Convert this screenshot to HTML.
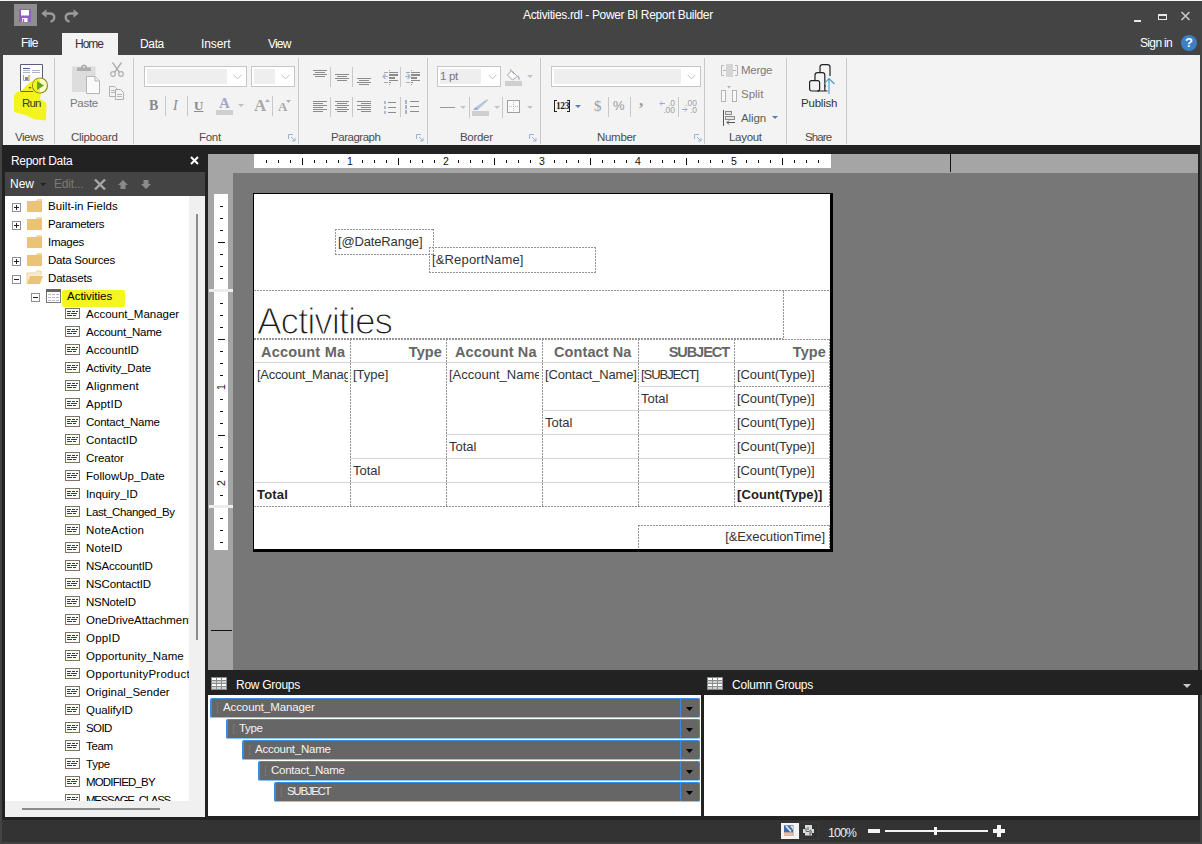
<!DOCTYPE html>
<html>
<head>
<meta charset="utf-8">
<title>Activities.rdl - Power BI Report Builder</title>
<style>
html,body{margin:0;padding:0;}
body{width:1202px;height:844px;overflow:hidden;background:#444444;position:relative;font-family:"Liberation Sans",sans-serif;font-size:12px;color:#000;}
.a{position:absolute;}
.t{position:absolute;white-space:nowrap;line-height:14px;}
svg{position:absolute;overflow:visible;}
/* title */
#topline{left:0;top:0;width:1202px;height:1px;background:#f4f4f4;}
#titlebar{left:0;top:1px;width:1202px;height:53px;background:#444444;}
.w{color:#fff;}
.u{font-size:11.5px;letter-spacing:-0.3px;}
/* ribbon */
#ribbon{left:3px;top:55px;width:1197px;height:90px;background:#f3f3f3;}
.sep{position:absolute;width:1px;background:#c9c9c9;top:58px;height:86px;}
.glabel{color:#4c4c4c;}
.gray{color:#8a8a8a;}
.combo{position:absolute;background:#fff;border:1px solid #c6c6c6;box-sizing:border-box;}
.combo i{position:absolute;left:2px;top:2px;bottom:2px;background:#eeeeee;}
.isep{position:absolute;width:1px;background:#c8c8c8;}
/* left panel */
#strip{left:2px;top:145px;width:1198px;height:675px;background:#222;}
#lp-head{left:5px;top:147px;width:200px;height:25px;background:#222222;}
#lp-tool{left:5px;top:172px;width:200px;height:24px;background:#444444;}
#lp-tree{left:5px;top:196px;width:184px;height:605px;background:#fff;overflow:hidden;}
#lp-scroll{left:189px;top:196px;width:16px;height:605px;background:#f0f0f0;}
#lp-hscroll{left:5px;top:801px;width:200px;height:16px;background:#f0f0f0;}
.tr{position:absolute;white-space:nowrap;line-height:14px;font-size:11.5px;color:#000;}
/* design */
#rulerbg{left:208px;top:154px;width:990px;height:516px;background:#a5a5a5;}
#surface{left:233px;top:173px;width:965px;height:497px;background:#777777;}
#hruler{left:254px;top:154px;width:577px;height:14px;background:#fff;overflow:hidden;}
.vr{position:absolute;left:214px;width:14px;background:#fff;}
#page{left:254px;top:194px;width:576px;height:355px;background:#fff;overflow:hidden;}
.dot{position:absolute;box-sizing:border-box;background:repeating-linear-gradient(90deg,#939393 0 2px,transparent 2px 3px) 0 0/100% 1px no-repeat,repeating-linear-gradient(90deg,#939393 0 2px,transparent 2px 3px) 0 100%/100% 1px no-repeat,repeating-linear-gradient(180deg,#939393 0 2px,transparent 2px 3px) 0 0/1px 100% no-repeat,repeating-linear-gradient(180deg,#939393 0 2px,transparent 2px 3px) 100% 0/1px 100% no-repeat;}
.hd{position:absolute;height:1px;background:repeating-linear-gradient(90deg,#939393 0 2px,transparent 2px 3px);}
.vd{position:absolute;width:1px;background:repeating-linear-gradient(180deg,#939393 0 2px,transparent 2px 3px);}
.rt{margin-top:1px;position:absolute;white-space:nowrap;font-size:13px;line-height:16px;color:#333;}
/* bottom */
#gp-head{left:205px;top:670px;width:997px;height:25px;background:#222222;}
#gp-row{left:208px;top:695px;width:493px;height:121px;background:#fff;}
#gp-col{left:704px;top:695px;width:494px;height:121px;background:#fff;}
.grp{position:absolute;height:20px;background:#666666;border:1px solid #3d8be0;border-left-width:2px;border-bottom-color:#8cc4f4;box-sizing:border-box;border-radius:2px;}
.grp span{position:absolute;left:11px;top:1px;color:#f4f4f4;font-size:11.5px;line-height:14px;white-space:nowrap;}
.grp i{position:absolute;left:4px;top:1px;color:#7e776b;font-size:11px;line-height:14px;font-style:normal;}
.grp u{position:absolute;right:18px;top:0;bottom:0;width:1px;background:#3d8be0;}
#status{left:2px;top:820px;width:1198px;height:22px;background:#333333;}
</style>
</head>
<body>
<div class="a" id="titlebar"></div>
<div class="a" id="topline"></div>
<div class="a" id="ribbon"></div>

<!-- title bar -->
<div class="a" style="left:14px;top:4px;width:23px;height:22px;background:#8e8e8e;"></div>
<svg style="left:19px;top:9px" width="12" height="13" viewBox="0 0 12 13"><path d="M0 0h12v13h-12z" fill="#8d5fc7"/><rect x="2" y="1" width="8" height="5.500" fill="#fff"/><rect x="3" y="9" width="5.500" height="4" fill="#fff"/><rect x="3.800" y="10" width="1.400" height="3" fill="#8d5fc7"/></svg>
<svg style="left:41px;top:9px" width="15" height="14" viewBox="0 0 15 14"><path d="M0.300 4.500 L5.500 0.300 L5.500 3.200 L5.500 8.700 Z" fill="#9a9a9a"/><path d="M4.500 4.500 H8.500 C11.500 4.500 13.300 6.300 13.300 8.500 C13.300 10.500 12 12 9.500 12.600" fill="none" stroke="#9a9a9a" stroke-width="2.300"/></svg>
<svg style="left:64px;top:9px" width="15" height="14" viewBox="0 0 15 14"><path d="M14.700 4.500 L9.500 0.300 L9.500 8.700 Z" fill="#9a9a9a"/><path d="M10.500 4.500 H6.500 C3.500 4.500 1.700 6.300 1.700 8.500 C1.700 10.500 3 12 5.500 12.600" fill="none" stroke="#9a9a9a" stroke-width="2.300"/></svg>
<div class="t w" style="left:523px;top:8px;letter-spacing:-0.34px;">Activities.rdl - Power BI Report Builder</div>
<div class="a" style="left:1134px;top:20px;width:7px;height:2px;background:#e8e8e8;"></div>
<div class="a" style="left:1158px;top:14px;width:9px;height:6px;box-sizing:border-box;border:1px solid #e8e8e8;border-top-width:2px;"></div>
<svg style="left:1181px;top:12px" width="9" height="8" viewBox="0 0 9 8"><path d="M0.5 0 L8.5 8 M8.5 0 L0.5 8" stroke="#c8c8c8" stroke-width="1.6" fill="none"/></svg>
<!-- tabs -->
<div class="a" style="left:62px;top:33px;width:56px;height:22px;background:#f3f3f3;"></div>
<div class="t w" style="left:21px;top:36px;letter-spacing:-0.6px;">File</div>
<div class="t" style="left:75px;top:37px;color:#333;letter-spacing:-1.0px;">Home</div>
<div class="t w" style="left:140px;top:37px;letter-spacing:-0.35px;">Data</div>
<div class="t w" style="left:201px;top:37px;letter-spacing:-0.1px;">Insert</div>
<div class="t w" style="left:268px;top:37px;letter-spacing:-0.8px;">View</div>
<div class="t w" style="left:1140px;top:36px;letter-spacing:-0.65px;">Sign in</div>
<div class="a" style="left:1181px;top:35px;width:16px;height:16px;border-radius:8px;background:#3c80c5;"></div>
<div class="t w" style="left:1185px;top:36px;font-weight:bold;font-size:13px;">?</div>

<!-- ribbon: views + clipboard -->
<div class="sep" style="left:54px"></div><div class="sep" style="left:133px"></div><div class="sep" style="left:298px"></div><div class="sep" style="left:427px"></div><div class="sep" style="left:540px"></div><div class="sep" style="left:704px"></div><div class="sep" style="left:786px"></div><div class="sep" style="left:846px"></div>
<svg style="left:0;top:0" width="60" height="130" viewBox="0 0 60 130"><path d="M20.500 64.500 H42.500 V91.500 H20.500 Z" fill="#fdfdfd" stroke="#5c5c78" stroke-width="1"/><path d="M23 68.500 H30" stroke="#4a5a8a"/><path d="M23 70.500 H30 M32 70.500 H40 M23 72.500 H30 M32 72.500 H40" stroke="#a8b4c8"/><path d="M23.500 75 V80.500 H29.500 V75" fill="none" stroke="#9aa6c0"/><rect x="25" y="77" width="3" height="3" fill="#7a86b0"/><rect x="28" y="75" width="2" height="5" fill="#d8c880"/>
<path d="M20.500 91.500 L30 82 L36 80 L44 86 L41 93.500 L40 99 L46.500 103 L46 120.500 L35 119.500 L25 115 L14 112 L14 95 L17 92 Z" fill="#f3f31e"/><path d="M21 91.500 H33" stroke="#5c5c78"/><circle cx="40" cy="85.500" r="7.500" fill="#fbfbc8" stroke="#8c8c22" stroke-width="1.200"/><path d="M33 85.500 A7 7 0 0 0 40 92.500 L40 78.500 A7 7 0 0 0 33 85.500Z" fill="#f3f31e"/><path d="M37 81 L44 85.500 L37 90 Z" fill="#6ba31f"/><path d="M28.500 87 H31.500 L30 89 Z" fill="#555"/></svg>
<div class="t u" style="left:22px;top:96px;color:#3a3a20;letter-spacing:-0.85px;">Run</div>
<div class="t u glabel" style="left:15px;top:130px;letter-spacing:-0.45px;">Views</div>
<svg style="left:72px;top:64px" width="28" height="30" viewBox="0 0 28 30"><rect x="0" y="2.500" width="23.500" height="25.500" fill="#dddddd"/><path d="M5 7 V3.500 H9 C9 -0.500 15 -0.500 15 3.500 H19 V7 Z" fill="#adadad"/><circle cx="12" cy="3" r="1" fill="#e4e4e4"/><path d="M14.5 12.500 H23 L27.500 17 V29.500 H14.500 Z" fill="#fafafa" stroke="#b5b5b5" stroke-width="1"/><path d="M23 12.500 V17 H27.500" fill="none" stroke="#b5b5b5" stroke-width="1"/></svg>
<div class="t u" style="left:70px;top:96px;color:#7a7a7a;">Paste</div>
<svg style="left:110px;top:62px" width="14" height="15" viewBox="0 0 14 15"><path d="M2.500 0.500 L9.500 10.500 M11.500 0.500 L4.500 10.500" stroke="#b0b0b0" stroke-width="1.4" fill="none"/><circle cx="3" cy="12" r="2.300" fill="none" stroke="#b0b0b0" stroke-width="1.200"/><circle cx="11" cy="12" r="2.300" fill="none" stroke="#b0b0b0" stroke-width="1.200"/></svg>
<svg style="left:109px;top:86px" width="15" height="14" viewBox="0 0 15 14"><path d="M0.500 0.500 H5.500 L8.500 3.500 V10.500 H0.500 Z" fill="#f3f3f3" stroke="#b0b0b0"/><path d="M6.500 3.500 H11.500 L14.500 6.500 V13.500 H6.500 Z" fill="#f3f3f3" stroke="#b0b0b0"/><path d="M2 4.500 H6 M2 6.500 H6 M8 8.500 H13 M8 10.500 H13" stroke="#b8b8b8"/></svg>
<div class="t u glabel" style="left:71px;top:130px;">Clipboard</div>
<!-- font -->
<div class="combo" style="left:144px;top:66px;width:103px;height:21px;"><i style="width:80px"></i></div>
<svg style="left:233px;top:74px" width="9" height="6" viewBox="0 0 9 6"><path d="M0.500 0.800 L4.500 4.800 L8.500 0.800" fill="none" stroke="#c0c0c0" stroke-width="1"/></svg>
<div class="combo" style="left:251px;top:66px;width:44px;height:21px;"><i style="width:21px"></i></div>
<svg style="left:281px;top:74px" width="9" height="6" viewBox="0 0 9 6"><path d="M0.500 0.800 L4.500 4.800 L8.500 0.800" fill="none" stroke="#c0c0c0" stroke-width="1"/></svg>
<div class="t" style="left:149px;top:98px;font-family:'Liberation Serif',serif;font-weight:bold;font-size:14px;line-height:16px;color:#8a8a8a;">B</div>
<div class="isep" style="left:165px;top:96px;height:20px;"></div>
<div class="t" style="left:173px;top:98px;font-family:'Liberation Serif',serif;font-style:italic;font-size:14px;line-height:16px;color:#8a8a8a;">I</div>
<div class="isep" style="left:187px;top:96px;height:20px;"></div>
<div class="t" style="left:194px;top:98px;font-family:'Liberation Serif',serif;font-weight:bold;font-size:13px;line-height:16px;color:#8a8a8a;text-decoration:underline;">U</div>
<div class="t" style="left:219px;top:95px;font-family:'Liberation Serif',serif;font-weight:bold;font-size:15px;line-height:16px;color:#a2a6cc;">A</div>
<div class="a" style="left:216px;top:110px;width:17px;height:5px;background:#cfcfcf;"></div>
<svg style="left:238px;top:104px" width="6" height="3" viewBox="0 0 6 3"><path d="M0 0 H6 L3 3 Z" fill="#bdbdbd"/></svg>
<div class="t" style="left:254px;top:97px;font-family:'Liberation Serif',serif;font-weight:bold;font-size:17px;line-height:18px;color:#a8a8a8;">A</div>
<svg style="left:265px;top:99px" width="5" height="3" viewBox="0 0 5 3"><path d="M0 3 H5 L2.500 0 Z" fill="#b0b0b0"/></svg>
<div class="isep" style="left:272px;top:96px;height:20px;"></div>
<div class="t" style="left:278px;top:100px;font-family:'Liberation Serif',serif;font-weight:bold;font-size:13px;line-height:14px;color:#a8a8a8;">A</div>
<svg style="left:286px;top:100px" width="5" height="3" viewBox="0 0 5 3"><path d="M0 0 H5 L2.500 3 Z" fill="#b0b0b0"/></svg>
<div class="t u glabel" style="left:199px;top:130px;">Font</div>
<svg class="launch" style="left:288px;top:134px" width="8" height="8" viewBox="0 0 8 8"><path d="M0.500 5 V0.500 H5" fill="none" stroke="#9bb4cf"/><path d="M3 3 L7 7 M7 4 V7 H4" fill="none" stroke="#9bb4cf"/></svg>
<!-- paragraph -->
<svg style="left:0;top:0" width="1202" height="150" viewBox="0 0 1202 150"><rect x="313.0" y="70" width="14" height="1" fill="#8c8c8c"/><rect x="315.0" y="72" width="10" height="1" fill="#8c8c8c"/><rect x="313.0" y="74" width="14" height="1" fill="#8c8c8c"/><rect x="315.0" y="76" width="10" height="1" fill="#8c8c8c"/><rect x="335.0" y="74" width="14" height="1" fill="#8c8c8c"/><rect x="337.0" y="76" width="10" height="1" fill="#8c8c8c"/><rect x="335.0" y="78" width="14" height="1" fill="#8c8c8c"/><rect x="337.0" y="80" width="10" height="1" fill="#8c8c8c"/><rect x="357.0" y="78" width="14" height="1" fill="#8c8c8c"/><rect x="359.0" y="80" width="10" height="1" fill="#8c8c8c"/><rect x="357.0" y="82" width="14" height="1" fill="#8c8c8c"/><rect x="359.0" y="84" width="10" height="1" fill="#8c8c8c"/><rect x="330" y="67" width="1" height="20" fill="#c8c8c8"/><rect x="352" y="67" width="1" height="20" fill="#c8c8c8"/><rect x="400" y="67" width="1" height="20" fill="#c8c8c8"/><rect x="330" y="97" width="1" height="20" fill="#c8c8c8"/><rect x="352" y="97" width="1" height="20" fill="#c8c8c8"/><rect x="400" y="97" width="1" height="20" fill="#c8c8c8"/><rect x="389" y="70" width="1" height="1" fill="#999"/><rect x="384" y="72" width="4" height="1" fill="#aaa"/><rect x="389" y="72" width="9" height="1" fill="#8c8c8c"/><rect x="389" y="74" width="9" height="2" fill="#8c8c8c"/><rect x="389" y="77" width="6" height="2" fill="#8c8c8c"/><rect x="389" y="80" width="9" height="1" fill="#8c8c8c"/><rect x="384" y="82" width="4" height="1" fill="#aaa"/><rect x="389" y="82" width="2" height="1" fill="#8c8c8c"/><rect x="389" y="84" width="1" height="1" fill="#999"/><path d="M388 76.5 H383 M385.5 74 L383 76.5 L385.5 79" stroke="#a4b4d0" stroke-width="1.2" fill="none"/><rect x="411" y="70" width="1" height="1" fill="#999"/><rect x="406" y="72" width="4" height="1" fill="#aaa"/><rect x="411" y="72" width="9" height="1" fill="#8c8c8c"/><rect x="411" y="74" width="9" height="2" fill="#8c8c8c"/><rect x="411" y="77" width="6" height="2" fill="#8c8c8c"/><rect x="411" y="80" width="9" height="1" fill="#8c8c8c"/><rect x="406" y="82" width="4" height="1" fill="#aaa"/><rect x="411" y="82" width="2" height="1" fill="#8c8c8c"/><rect x="411" y="84" width="1" height="1" fill="#999"/><path d="M405 76.5 H410 M407.5 74 L410 76.5 L407.5 79" stroke="#a4b4d0" stroke-width="1.2" fill="none"/><rect x="313" y="101" width="14" height="1" fill="#8c8c8c"/><rect x="313" y="103" width="10" height="1" fill="#8c8c8c"/><rect x="313" y="105" width="14" height="1" fill="#8c8c8c"/><rect x="313" y="107" width="10" height="1" fill="#8c8c8c"/><rect x="313" y="109" width="14" height="1" fill="#8c8c8c"/><rect x="313" y="111" width="10" height="1" fill="#8c8c8c"/><rect x="335.0" y="101" width="14" height="1" fill="#8c8c8c"/><rect x="337.0" y="103" width="10" height="1" fill="#8c8c8c"/><rect x="335.0" y="105" width="14" height="1" fill="#8c8c8c"/><rect x="337.0" y="107" width="10" height="1" fill="#8c8c8c"/><rect x="335.0" y="109" width="14" height="1" fill="#8c8c8c"/><rect x="337.0" y="111" width="10" height="1" fill="#8c8c8c"/><rect x="357" y="101" width="14" height="1" fill="#8c8c8c"/><rect x="361" y="103" width="10" height="1" fill="#8c8c8c"/><rect x="357" y="105" width="14" height="1" fill="#8c8c8c"/><rect x="361" y="107" width="10" height="1" fill="#8c8c8c"/><rect x="357" y="109" width="14" height="1" fill="#8c8c8c"/><rect x="361" y="111" width="10" height="1" fill="#8c8c8c"/><rect x="384" y="101" width="2" height="3" fill="#b4b8cc"/><rect x="388" y="102" width="8" height="1" fill="#8c8c8c"/><rect x="384" y="106" width="2" height="3" fill="#b4b8cc"/><rect x="388" y="107" width="8" height="1" fill="#8c8c8c"/><rect x="384" y="111" width="2" height="3" fill="#b4b8cc"/><rect x="388" y="112" width="8" height="1" fill="#8c8c8c"/><rect x="405" y="100" width="2" height="4" fill="#a4b4d0"/><rect x="410" y="101" width="9" height="1" fill="#8c8c8c"/><rect x="405" y="105" width="2" height="4" fill="#a4b4d0"/><rect x="410" y="106" width="9" height="1" fill="#8c8c8c"/><rect x="405" y="110" width="2" height="4" fill="#a4b4d0"/><rect x="410" y="111" width="9" height="1" fill="#8c8c8c"/></svg>
<div class="t u glabel" style="left:331px;top:130px;letter-spacing:-0.47px;">Paragraph</div>
<svg class="launch" style="left:416px;top:134px" width="8" height="8" viewBox="0 0 8 8"><path d="M0.500 5 V0.500 H5" fill="none" stroke="#9bb4cf"/><path d="M3 3 L7 7 M7 4 V7 H4" fill="none" stroke="#9bb4cf"/></svg>
<!-- border -->
<div class="combo" style="left:437px;top:66px;width:64px;height:21px;"><i style="width:41px"></i></div>
<div class="t u" style="left:440px;top:69px;color:#777;">1 pt</div>
<svg style="left:488px;top:74px" width="9" height="6" viewBox="0 0 9 6"><path d="M0.500 0.800 L4.500 4.800 L8.500 0.800" fill="none" stroke="#c0c0c0" stroke-width="1"/></svg>
<svg style="left:505px;top:68px" width="18" height="18" viewBox="0 0 18 18"><rect x="0" y="13" width="17" height="5" fill="#cfcfcf"/><path d="M6.500 2.500 L12.500 8.500 L7.500 12 L2.500 7 Z" fill="#fafafa" stroke="#a8a8a8"/><path d="M5 1 L9 6" stroke="#a8a8a8" fill="none"/><path d="M13 7 C14.500 9 15.500 10.500 14.500 12 C13.500 12.500 12.500 11.500 13 7Z" fill="#a9bfe0"/></svg>
<svg style="left:527px;top:75px" width="6" height="3" viewBox="0 0 6 3"><path d="M0 0 H6 L3 3 Z" fill="#c4c4c4"/></svg>
<div class="a" style="left:440px;top:107px;width:15px;height:1px;background:#9a9a9a;"></div>
<svg style="left:460px;top:106px" width="6" height="3" viewBox="0 0 6 3"><path d="M0 0 H6 L3 3 Z" fill="#c4c4c4"/></svg>
<div class="isep" style="left:469px;top:97px;height:21px;"></div>
<svg style="left:472px;top:99px" width="18" height="17" viewBox="0 0 18 17"><rect x="0" y="12" width="17" height="5" fill="#cfcfcf"/><path d="M3 10.500 L6 10.500 L15 2.500 L13.500 1 L4 8 Z" fill="#b4c6e4"/><path d="M13.500 1 L15 2.500 L16.500 1.500 L15 0 Z" fill="#e8c890"/><path d="M1 11 L4 8 L6 10.500 Z" fill="#8ea8d0"/></svg>
<svg style="left:494px;top:106px" width="6" height="3" viewBox="0 0 6 3"><path d="M0 0 H6 L3 3 Z" fill="#c4c4c4"/></svg>
<div class="isep" style="left:502px;top:97px;height:21px;"></div>
<svg style="left:507px;top:100px" width="13" height="13" viewBox="0 0 13 13"><rect x="0.500" y="0.500" width="12" height="12" fill="#fafafa" stroke="#a0a0a0"/><path d="M6.500 2 V11 M2 6.500 H11" stroke="#c0c0c0" stroke-dasharray="1 1"/></svg>
<svg style="left:527px;top:106px" width="6" height="3" viewBox="0 0 6 3"><path d="M0 0 H6 L3 3 Z" fill="#c4c4c4"/></svg>
<div class="t u glabel" style="left:460px;top:130px;">Border</div>
<svg class="launch" style="left:529px;top:134px" width="8" height="8" viewBox="0 0 8 8"><path d="M0.500 5 V0.500 H5" fill="none" stroke="#9bb4cf"/><path d="M3 3 L7 7 M7 4 V7 H4" fill="none" stroke="#9bb4cf"/></svg>
<!-- number -->
<div class="combo" style="left:551px;top:66px;width:150px;height:21px;"><i style="width:127px"></i></div>
<svg style="left:687px;top:74px" width="9" height="6" viewBox="0 0 9 6"><path d="M0.500 0.800 L4.500 4.800 L8.500 0.800" fill="none" stroke="#c0c0c0" stroke-width="1"/></svg>
<div class="t" style="left:554px;top:100px;font-family:'Liberation Serif',serif;font-weight:bold;font-size:9.5px;line-height:12px;color:#222;letter-spacing:-0.4px;border-left:1px solid #222;border-right:1px solid #222;padding:0 1px;height:12px;width:12px;overflow:hidden;">123</div>
<div class="a" style="left:554px;top:100px;width:3px;height:1px;background:#222"></div><div class="a" style="left:554px;top:111px;width:3px;height:1px;background:#222"></div><div class="a" style="left:567px;top:100px;width:3px;height:1px;background:#222"></div><div class="a" style="left:567px;top:111px;width:3px;height:1px;background:#222"></div>
<svg style="left:575px;top:105px" width="6" height="3" viewBox="0 0 6 3"><path d="M0 0 H6 L3 3 Z" fill="#5b7fb0"/></svg>
<div class="t" style="left:594px;top:98px;font-family:'Liberation Serif',serif;font-size:15px;line-height:16px;color:#a0a0a0;">$</div>
<div class="isep" style="left:608px;top:97px;height:20px;"></div>
<div class="t" style="left:613px;top:98px;font-size:13px;line-height:16px;color:#999;letter-spacing:-0.5px;">%</div>
<div class="isep" style="left:630px;top:97px;height:20px;"></div>
<div class="t" style="left:639px;top:93px;font-family:'Liberation Serif',serif;font-weight:bold;font-size:17px;line-height:16px;color:#9a9a9a;">,</div>
<div class="t" style="left:662px;top:100px;width:13px;text-align:right;font-size:8.5px;line-height:6.5px;color:#a0a0a0;letter-spacing:0;">.0<br>.00</div>
<svg style="left:659px;top:101px" width="6" height="5" viewBox="0 0 6 5"><path d="M6 2.500 H1 M3 0.500 L1 2.500 L3 4.500" stroke="#9aaccc" fill="none"/></svg>
<div class="isep" style="left:678px;top:97px;height:20px;"></div>
<div class="t" style="left:684px;top:100px;width:13px;text-align:right;font-size:8.5px;line-height:6.5px;color:#a0a0a0;letter-spacing:0;">.00<br>.0</div>
<svg style="left:682px;top:107px" width="6" height="5" viewBox="0 0 6 5"><path d="M0 2.500 H5 M3 0.500 L5 2.500 L3 4.500" stroke="#9aaccc" fill="none"/></svg>
<div class="t u glabel" style="left:597px;top:130px;">Number</div>
<svg class="launch" style="left:694px;top:134px" width="8" height="8" viewBox="0 0 8 8"><path d="M0.500 5 V0.500 H5" fill="none" stroke="#9bb4cf"/><path d="M3 3 L7 7 M7 4 V7 H4" fill="none" stroke="#9bb4cf"/></svg>
<!-- layout -->
<svg style="left:721px;top:64px" width="17" height="13" viewBox="0 0 17 13"><path d="M3 1.500 H0.500 V11.500 H3 M14 1.500 H16.500 V11.500 H14" fill="none" stroke="#b4b4b4"/><rect x="5" y="0" width="7" height="13" fill="#d4d4d4"/><path d="M2 6.500 H5 M12 6.500 H15" stroke="#b4b4b4"/></svg>
<div class="t u" style="left:741px;top:63px;color:#7c7c7c;">Merge</div>
<svg style="left:721px;top:86px" width="17" height="16" viewBox="0 0 17 16"><rect x="0.500" y="4.500" width="4" height="11" fill="#f8f8f8" stroke="#b4b4b4"/><rect x="11.500" y="4.500" width="4" height="11" fill="#f8f8f8" stroke="#b4b4b4"/><path d="M6 0 H10 L8 2.500Z" fill="#b4b4b4"/></svg>
<div class="t u" style="left:741px;top:87px;color:#7c7c7c;letter-spacing:0px;">Split</div>
<svg style="left:723px;top:110px" width="14" height="16" viewBox="0 0 14 16"><path d="M0.500 0 V16" stroke="#555"/><rect x="2.500" y="1.500" width="6" height="3" fill="#e4e4e4" stroke="#8a8a8a"/><rect x="2.500" y="6.500" width="9" height="3" fill="#e4e4e4" stroke="#8a8a8a"/><path d="M12 12.500 H4 M6 10.500 L4 12.500 L6 14.500" stroke="#555" fill="none"/></svg>
<div class="t u" style="left:741px;top:111px;color:#5a5a5a;letter-spacing:-0.1px;">Align</div>
<svg style="left:772px;top:116px" width="6" height="3" viewBox="0 0 6 3"><path d="M0 0 H6 L3 3 Z" fill="#5b7fb0"/></svg>
<div class="t u glabel" style="left:729px;top:130px;">Layout</div>
<!-- share -->
<svg style="left:808px;top:64px" width="30" height="31" viewBox="0 0 30 31"><path d="M12 8.500 V3 C12 1.300 13 0.600 14.500 0.600 H19.500 C21 0.600 22 1.300 22 3 V12" fill="none" stroke="#222" stroke-width="1.200"/><path d="M7 16 V11 C7 9.300 8 8.600 9.500 8.600 H14.500 C16 8.600 16.800 9.300 16.800 11 V27" fill="none" stroke="#222" stroke-width="1.200"/><rect x="1.600" y="16.600" width="10" height="10.400" rx="2" fill="none" stroke="#222" stroke-width="1.200"/><path d="M9 27 H19.500 M16.800 22 H18" stroke="#222" stroke-width="1.200" fill="none"/><path d="M21 30 V14.500 M16 20 L21 14.500 L26.500 20" fill="none" stroke="#3f9bc9" stroke-width="1.100"/></svg>
<div class="t u" style="left:801px;top:96px;color:#333;letter-spacing:-0.2px;">Publish</div>
<div class="t u glabel" style="left:805px;top:130px;letter-spacing:-0.9px;">Share</div>
<div class="a" id="strip"></div>
<div class="a" id="lp-head"></div>
<div class="a" id="lp-tool"></div>
<div class="a" id="lp-tree">
<svg style="left:7px;top:7px" width="9" height="9" viewBox="0 0 9 9"><rect x="0.500" y="0.500" width="8" height="8" fill="#fff" stroke="#8e8e9a"/><path d="M2 4.500 H7" stroke="#222"/><path d="M4.500 2 V7" stroke="#222"/></svg><svg style="left:22px;top:3px" width="16" height="13" viewBox="0 0 16 13"><path d="M0 2 H9 L10.500 0 H15 V13 H0 Z" fill="#ebc374"/><path d="M9 2 L10.500 0 H15 V2 Z" fill="#f1d9a4"/></svg><div class="tr" style="left:43px;top:3px;letter-spacing:0.05px;">Built-in Fields</div>
<svg style="left:7px;top:25px" width="9" height="9" viewBox="0 0 9 9"><rect x="0.500" y="0.500" width="8" height="8" fill="#fff" stroke="#8e8e9a"/><path d="M2 4.500 H7" stroke="#222"/><path d="M4.500 2 V7" stroke="#222"/></svg><svg style="left:22px;top:21px" width="16" height="13" viewBox="0 0 16 13"><path d="M0 2 H9 L10.500 0 H15 V13 H0 Z" fill="#ebc374"/><path d="M9 2 L10.500 0 H15 V2 Z" fill="#f1d9a4"/></svg><div class="tr" style="left:43px;top:21px;letter-spacing:-0.34px;">Parameters</div>
<svg style="left:22px;top:39px" width="16" height="13" viewBox="0 0 16 13"><path d="M0 2 H9 L10.500 0 H15 V13 H0 Z" fill="#ebc374"/><path d="M9 2 L10.500 0 H15 V2 Z" fill="#f1d9a4"/></svg><div class="tr" style="left:43px;top:39px;letter-spacing:-0.28px;">Images</div>
<svg style="left:7px;top:61px" width="9" height="9" viewBox="0 0 9 9"><rect x="0.500" y="0.500" width="8" height="8" fill="#fff" stroke="#8e8e9a"/><path d="M2 4.500 H7" stroke="#222"/><path d="M4.500 2 V7" stroke="#222"/></svg><svg style="left:22px;top:57px" width="16" height="13" viewBox="0 0 16 13"><path d="M0 2 H9 L10.500 0 H15 V13 H0 Z" fill="#ebc374"/><path d="M9 2 L10.500 0 H15 V2 Z" fill="#f1d9a4"/></svg><div class="tr" style="left:43px;top:57px;letter-spacing:-0.23px;">Data Sources</div>
<svg style="left:7px;top:79px" width="9" height="9" viewBox="0 0 9 9"><rect x="0.500" y="0.500" width="8" height="8" fill="#fff" stroke="#8e8e9a"/><path d="M2 4.500 H7" stroke="#222"/></svg><svg style="left:22px;top:75px" width="16" height="13" viewBox="0 0 16 13"><path d="M0 13 V2 H8 L9.500 0 H14 V4" fill="#f6ebd0" stroke="#ecd39a" stroke-width="1"/><path d="M0 13 L3 5 H16 L13 13 Z" fill="#ebc374"/></svg><div class="tr" style="left:43px;top:75px;letter-spacing:-0.17px;">Datasets</div>
<div class="a" style="left:57px;top:94px;width:63px;height:17px;background:#f5f520;border-radius:2px;"></div><svg style="left:26px;top:97px" width="9" height="9" viewBox="0 0 9 9"><rect x="0.500" y="0.500" width="8" height="8" fill="#fff" stroke="#8e8e9a"/><path d="M2 4.500 H7" stroke="#222"/></svg><svg style="left:41px;top:93px" width="15" height="14" viewBox="0 0 15 14"><rect x="0.500" y="0.500" width="14" height="13" fill="#fff" stroke="#777"/><rect x="0" y="0" width="15" height="3" fill="#666"/><rect x="2" y="5" width="3" height="1" fill="#b6b6d4"/><rect x="6" y="5" width="3" height="1" fill="#b6b6d4"/><rect x="10" y="5" width="3" height="1" fill="#b6b6d4"/><rect x="2" y="8" width="3" height="1" fill="#b6b6d4"/><rect x="6" y="8" width="3" height="1" fill="#b6b6d4"/><rect x="10" y="8" width="3" height="1" fill="#b6b6d4"/><rect x="2" y="11" width="3" height="1" fill="#b6b6d4"/><rect x="6" y="11" width="3" height="1" fill="#b6b6d4"/><rect x="10" y="11" width="3" height="1" fill="#b6b6d4"/></svg><div class="tr" style="left:62px;top:93px;letter-spacing:-0.02px;">Activities</div>
<svg style="left:60px;top:112px" width="15" height="11" viewBox="0 0 15 11"><rect x="0.500" y="0.500" width="14" height="10" fill="#fff" stroke="#7c7466"/><path d="M2 3.500 H6 M7 3.500 H10 M11 3.500 H13 M2 5.500 H5 M6 5.500 H12 M2 7.500 H7 M8 7.500 H11" stroke="#2c2ca4"/></svg><div class="tr" style="left:81px;top:111px;letter-spacing:-0.01px;">Account_Manager</div>
<svg style="left:60px;top:130px" width="15" height="11" viewBox="0 0 15 11"><rect x="0.500" y="0.500" width="14" height="10" fill="#fff" stroke="#7c7466"/><path d="M2 3.500 H6 M7 3.500 H10 M11 3.500 H13 M2 5.500 H5 M6 5.500 H12 M2 7.500 H7 M8 7.500 H11" stroke="#2c2ca4"/></svg><div class="tr" style="left:81px;top:129px;letter-spacing:-0.24px;">Account_Name</div>
<svg style="left:60px;top:148px" width="15" height="11" viewBox="0 0 15 11"><rect x="0.500" y="0.500" width="14" height="10" fill="#fff" stroke="#7c7466"/><path d="M2 3.500 H6 M7 3.500 H10 M11 3.500 H13 M2 5.500 H5 M6 5.500 H12 M2 7.500 H7 M8 7.500 H11" stroke="#2c2ca4"/></svg><div class="tr" style="left:81px;top:147px;letter-spacing:-0.02px;">AccountID</div>
<svg style="left:60px;top:166px" width="15" height="11" viewBox="0 0 15 11"><rect x="0.500" y="0.500" width="14" height="10" fill="#fff" stroke="#7c7466"/><path d="M2 3.500 H6 M7 3.500 H10 M11 3.500 H13 M2 5.500 H5 M6 5.500 H12 M2 7.500 H7 M8 7.500 H11" stroke="#2c2ca4"/></svg><div class="tr" style="left:81px;top:165px;letter-spacing:-0.17px;">Activity_Date</div>
<svg style="left:60px;top:184px" width="15" height="11" viewBox="0 0 15 11"><rect x="0.500" y="0.500" width="14" height="10" fill="#fff" stroke="#7c7466"/><path d="M2 3.500 H6 M7 3.500 H10 M11 3.500 H13 M2 5.500 H5 M6 5.500 H12 M2 7.500 H7 M8 7.500 H11" stroke="#2c2ca4"/></svg><div class="tr" style="left:81px;top:183px;letter-spacing:0.21px;">Alignment</div>
<svg style="left:60px;top:202px" width="15" height="11" viewBox="0 0 15 11"><rect x="0.500" y="0.500" width="14" height="10" fill="#fff" stroke="#7c7466"/><path d="M2 3.500 H6 M7 3.500 H10 M11 3.500 H13 M2 5.500 H5 M6 5.500 H12 M2 7.500 H7 M8 7.500 H11" stroke="#2c2ca4"/></svg><div class="tr" style="left:81px;top:201px;letter-spacing:0.21px;">ApptID</div>
<svg style="left:60px;top:220px" width="15" height="11" viewBox="0 0 15 11"><rect x="0.500" y="0.500" width="14" height="10" fill="#fff" stroke="#7c7466"/><path d="M2 3.500 H6 M7 3.500 H10 M11 3.500 H13 M2 5.500 H5 M6 5.500 H12 M2 7.500 H7 M8 7.500 H11" stroke="#2c2ca4"/></svg><div class="tr" style="left:81px;top:219px;letter-spacing:-0.26px;">Contact_Name</div>
<svg style="left:60px;top:238px" width="15" height="11" viewBox="0 0 15 11"><rect x="0.500" y="0.500" width="14" height="10" fill="#fff" stroke="#7c7466"/><path d="M2 3.500 H6 M7 3.500 H10 M11 3.500 H13 M2 5.500 H5 M6 5.500 H12 M2 7.500 H7 M8 7.500 H11" stroke="#2c2ca4"/></svg><div class="tr" style="left:81px;top:237px;letter-spacing:0.01px;">ContactID</div>
<svg style="left:60px;top:256px" width="15" height="11" viewBox="0 0 15 11"><rect x="0.500" y="0.500" width="14" height="10" fill="#fff" stroke="#7c7466"/><path d="M2 3.500 H6 M7 3.500 H10 M11 3.500 H13 M2 5.500 H5 M6 5.500 H12 M2 7.500 H7 M8 7.500 H11" stroke="#2c2ca4"/></svg><div class="tr" style="left:81px;top:255px;letter-spacing:-0.07px;">Creator</div>
<svg style="left:60px;top:274px" width="15" height="11" viewBox="0 0 15 11"><rect x="0.500" y="0.500" width="14" height="10" fill="#fff" stroke="#7c7466"/><path d="M2 3.500 H6 M7 3.500 H10 M11 3.500 H13 M2 5.500 H5 M6 5.500 H12 M2 7.500 H7 M8 7.500 H11" stroke="#2c2ca4"/></svg><div class="tr" style="left:81px;top:273px;letter-spacing:0.01px;">FollowUp_Date</div>
<svg style="left:60px;top:292px" width="15" height="11" viewBox="0 0 15 11"><rect x="0.500" y="0.500" width="14" height="10" fill="#fff" stroke="#7c7466"/><path d="M2 3.500 H6 M7 3.500 H10 M11 3.500 H13 M2 5.500 H5 M6 5.500 H12 M2 7.500 H7 M8 7.500 H11" stroke="#2c2ca4"/></svg><div class="tr" style="left:81px;top:291px;letter-spacing:-0.08px;">Inquiry_ID</div>
<svg style="left:60px;top:310px" width="15" height="11" viewBox="0 0 15 11"><rect x="0.500" y="0.500" width="14" height="10" fill="#fff" stroke="#7c7466"/><path d="M2 3.500 H6 M7 3.500 H10 M11 3.500 H13 M2 5.500 H5 M6 5.500 H12 M2 7.500 H7 M8 7.500 H11" stroke="#2c2ca4"/></svg><div class="tr" style="left:81px;top:309px;letter-spacing:-0.41px;">Last_Changed_By</div>
<svg style="left:60px;top:328px" width="15" height="11" viewBox="0 0 15 11"><rect x="0.500" y="0.500" width="14" height="10" fill="#fff" stroke="#7c7466"/><path d="M2 3.500 H6 M7 3.500 H10 M11 3.500 H13 M2 5.500 H5 M6 5.500 H12 M2 7.500 H7 M8 7.500 H11" stroke="#2c2ca4"/></svg><div class="tr" style="left:81px;top:327px;letter-spacing:0.19px;">NoteAction</div>
<svg style="left:60px;top:346px" width="15" height="11" viewBox="0 0 15 11"><rect x="0.500" y="0.500" width="14" height="10" fill="#fff" stroke="#7c7466"/><path d="M2 3.500 H6 M7 3.500 H10 M11 3.500 H13 M2 5.500 H5 M6 5.500 H12 M2 7.500 H7 M8 7.500 H11" stroke="#2c2ca4"/></svg><div class="tr" style="left:81px;top:345px;letter-spacing:0.09px;">NoteID</div>
<svg style="left:60px;top:364px" width="15" height="11" viewBox="0 0 15 11"><rect x="0.500" y="0.500" width="14" height="10" fill="#fff" stroke="#7c7466"/><path d="M2 3.500 H6 M7 3.500 H10 M11 3.500 H13 M2 5.500 H5 M6 5.500 H12 M2 7.500 H7 M8 7.500 H11" stroke="#2c2ca4"/></svg><div class="tr" style="left:81px;top:363px;letter-spacing:-0.21px;">NSAccountID</div>
<svg style="left:60px;top:382px" width="15" height="11" viewBox="0 0 15 11"><rect x="0.500" y="0.500" width="14" height="10" fill="#fff" stroke="#7c7466"/><path d="M2 3.500 H6 M7 3.500 H10 M11 3.500 H13 M2 5.500 H5 M6 5.500 H12 M2 7.500 H7 M8 7.500 H11" stroke="#2c2ca4"/></svg><div class="tr" style="left:81px;top:381px;letter-spacing:-0.2px;">NSContactID</div>
<svg style="left:60px;top:400px" width="15" height="11" viewBox="0 0 15 11"><rect x="0.500" y="0.500" width="14" height="10" fill="#fff" stroke="#7c7466"/><path d="M2 3.500 H6 M7 3.500 H10 M11 3.500 H13 M2 5.500 H5 M6 5.500 H12 M2 7.500 H7 M8 7.500 H11" stroke="#2c2ca4"/></svg><div class="tr" style="left:81px;top:399px;letter-spacing:-0.24px;">NSNoteID</div>
<svg style="left:60px;top:418px" width="15" height="11" viewBox="0 0 15 11"><rect x="0.500" y="0.500" width="14" height="10" fill="#fff" stroke="#7c7466"/><path d="M2 3.500 H6 M7 3.500 H10 M11 3.500 H13 M2 5.500 H5 M6 5.500 H12 M2 7.500 H7 M8 7.500 H11" stroke="#2c2ca4"/></svg><div class="tr" style="left:81px;top:417px;letter-spacing:-0.06px;">OneDriveAttachment</div>
<svg style="left:60px;top:436px" width="15" height="11" viewBox="0 0 15 11"><rect x="0.500" y="0.500" width="14" height="10" fill="#fff" stroke="#7c7466"/><path d="M2 3.500 H6 M7 3.500 H10 M11 3.500 H13 M2 5.500 H5 M6 5.500 H12 M2 7.500 H7 M8 7.500 H11" stroke="#2c2ca4"/></svg><div class="tr" style="left:81px;top:435px;letter-spacing:0.19px;">OppID</div>
<svg style="left:60px;top:454px" width="15" height="11" viewBox="0 0 15 11"><rect x="0.500" y="0.500" width="14" height="10" fill="#fff" stroke="#7c7466"/><path d="M2 3.500 H6 M7 3.500 H10 M11 3.500 H13 M2 5.500 H5 M6 5.500 H12 M2 7.500 H7 M8 7.500 H11" stroke="#2c2ca4"/></svg><div class="tr" style="left:81px;top:453px;letter-spacing:0.08px;">Opportunity_Name</div>
<svg style="left:60px;top:472px" width="15" height="11" viewBox="0 0 15 11"><rect x="0.500" y="0.500" width="14" height="10" fill="#fff" stroke="#7c7466"/><path d="M2 3.500 H6 M7 3.500 H10 M11 3.500 H13 M2 5.500 H5 M6 5.500 H12 M2 7.500 H7 M8 7.500 H11" stroke="#2c2ca4"/></svg><div class="tr" style="left:81px;top:471px;letter-spacing:0.27px;">OpportunityProduct</div>
<svg style="left:60px;top:490px" width="15" height="11" viewBox="0 0 15 11"><rect x="0.500" y="0.500" width="14" height="10" fill="#fff" stroke="#7c7466"/><path d="M2 3.500 H6 M7 3.500 H10 M11 3.500 H13 M2 5.500 H5 M6 5.500 H12 M2 7.500 H7 M8 7.500 H11" stroke="#2c2ca4"/></svg><div class="tr" style="left:81px;top:489px;letter-spacing:0.04px;">Original_Sender</div>
<svg style="left:60px;top:508px" width="15" height="11" viewBox="0 0 15 11"><rect x="0.500" y="0.500" width="14" height="10" fill="#fff" stroke="#7c7466"/><path d="M2 3.500 H6 M7 3.500 H10 M11 3.500 H13 M2 5.500 H5 M6 5.500 H12 M2 7.500 H7 M8 7.500 H11" stroke="#2c2ca4"/></svg><div class="tr" style="left:81px;top:507px;letter-spacing:-0.05px;">QualifyID</div>
<svg style="left:60px;top:526px" width="15" height="11" viewBox="0 0 15 11"><rect x="0.500" y="0.500" width="14" height="10" fill="#fff" stroke="#7c7466"/><path d="M2 3.500 H6 M7 3.500 H10 M11 3.500 H13 M2 5.500 H5 M6 5.500 H12 M2 7.500 H7 M8 7.500 H11" stroke="#2c2ca4"/></svg><div class="tr" style="left:81px;top:525px;letter-spacing:-0.58px;">SOID</div>
<svg style="left:60px;top:544px" width="15" height="11" viewBox="0 0 15 11"><rect x="0.500" y="0.500" width="14" height="10" fill="#fff" stroke="#7c7466"/><path d="M2 3.500 H6 M7 3.500 H10 M11 3.500 H13 M2 5.500 H5 M6 5.500 H12 M2 7.500 H7 M8 7.500 H11" stroke="#2c2ca4"/></svg><div class="tr" style="left:81px;top:543px;letter-spacing:-0.35px;">Team</div>
<svg style="left:60px;top:562px" width="15" height="11" viewBox="0 0 15 11"><rect x="0.500" y="0.500" width="14" height="10" fill="#fff" stroke="#7c7466"/><path d="M2 3.500 H6 M7 3.500 H10 M11 3.500 H13 M2 5.500 H5 M6 5.500 H12 M2 7.500 H7 M8 7.500 H11" stroke="#2c2ca4"/></svg><div class="tr" style="left:81px;top:561px;letter-spacing:-0.24px;">Type</div>
<svg style="left:60px;top:580px" width="15" height="11" viewBox="0 0 15 11"><rect x="0.500" y="0.500" width="14" height="10" fill="#fff" stroke="#7c7466"/><path d="M2 3.500 H6 M7 3.500 H10 M11 3.500 H13 M2 5.500 H5 M6 5.500 H12 M2 7.500 H7 M8 7.500 H11" stroke="#2c2ca4"/></svg><div class="tr" style="left:81px;top:579px;letter-spacing:-0.84px;">MODIFIED_BY</div>
<svg style="left:60px;top:598px" width="15" height="11" viewBox="0 0 15 11"><rect x="0.500" y="0.500" width="14" height="10" fill="#fff" stroke="#7c7466"/><path d="M2 3.500 H6 M7 3.500 H10 M11 3.500 H13 M2 5.500 H5 M6 5.500 H12 M2 7.500 H7 M8 7.500 H11" stroke="#2c2ca4"/></svg><div class="tr" style="left:81px;top:597px;letter-spacing:-1.31px;">MESSAGE_CLASS</div>
</div>
<div class="a" id="lp-scroll"><div class="a" style="left:7px;top:18px;width:2px;height:426px;background:#8c8c8c"></div></div>
<div class="a" id="lp-hscroll"><div class="a" style="left:17px;top:7px;width:138px;height:2px;background:#8c8c8c"></div></div>
<!-- left panel -->
<div class="t w" style="left:11px;top:154px;font-size:12px;letter-spacing:-0.3px;">Report Data</div>
<svg style="left:190px;top:156px" width="9" height="9" viewBox="0 0 9 9"><path d="M1 1 L8 8 M8 1 L1 8" stroke="#fff" stroke-width="2" fill="none"/></svg>
<div class="t w" style="left:10px;top:177px;font-size:12px;">New</div>
<svg style="left:40px;top:183px" width="6" height="3" viewBox="0 0 6 3"><path d="M0 0 H6 L3 3 Z" fill="#222"/></svg>
<div class="t" style="left:54px;top:177px;font-size:12px;color:#7a7a7a;letter-spacing:-0.2px;">Edit...</div>
<svg style="left:94px;top:179px" width="12" height="11" viewBox="0 0 12 11"><path d="M1 0.500 L11 10.500 M11 0.500 L1 10.500" stroke="#a8a8a8" stroke-width="2.400" fill="none"/></svg>
<svg style="left:118px;top:180px" width="10" height="9" viewBox="0 0 10 9"><path d="M5 0 L10 5 H7.500 V9 H2.500 V5 H0 Z" fill="#8a8a8a"/></svg>
<svg style="left:141px;top:180px" width="10" height="9" viewBox="0 0 10 9"><path d="M5 9 L10 4 H7.500 V0 H2.500 V4 H0 Z" fill="#8a8a8a"/></svg>
<div class="a" id="rulerbg"></div>
<div class="a" id="surface"></div>
<div class="a" id="hruler"><div class="a" style="left:12px;top:6px;width:1px;height:3px;background:#111"></div><div class="a" style="left:24px;top:6px;width:1px;height:3px;background:#111"></div><div class="a" style="left:36px;top:6px;width:1px;height:3px;background:#111"></div><div class="a" style="left:48px;top:4px;width:1px;height:7px;background:#111"></div><div class="a" style="left:60px;top:6px;width:1px;height:3px;background:#111"></div><div class="a" style="left:72px;top:6px;width:1px;height:3px;background:#111"></div><div class="a" style="left:84px;top:6px;width:1px;height:3px;background:#111"></div><div class="t" style="left:91px;top:1px;width:10px;text-align:center;font-size:10.5px;line-height:12px;color:#111;">1</div><div class="a" style="left:108px;top:6px;width:1px;height:3px;background:#111"></div><div class="a" style="left:120px;top:6px;width:1px;height:3px;background:#111"></div><div class="a" style="left:132px;top:6px;width:1px;height:3px;background:#111"></div><div class="a" style="left:144px;top:4px;width:1px;height:7px;background:#111"></div><div class="a" style="left:156px;top:6px;width:1px;height:3px;background:#111"></div><div class="a" style="left:168px;top:6px;width:1px;height:3px;background:#111"></div><div class="a" style="left:180px;top:6px;width:1px;height:3px;background:#111"></div><div class="t" style="left:187px;top:1px;width:10px;text-align:center;font-size:10.5px;line-height:12px;color:#111;">2</div><div class="a" style="left:204px;top:6px;width:1px;height:3px;background:#111"></div><div class="a" style="left:216px;top:6px;width:1px;height:3px;background:#111"></div><div class="a" style="left:228px;top:6px;width:1px;height:3px;background:#111"></div><div class="a" style="left:240px;top:4px;width:1px;height:7px;background:#111"></div><div class="a" style="left:252px;top:6px;width:1px;height:3px;background:#111"></div><div class="a" style="left:264px;top:6px;width:1px;height:3px;background:#111"></div><div class="a" style="left:276px;top:6px;width:1px;height:3px;background:#111"></div><div class="t" style="left:283px;top:1px;width:10px;text-align:center;font-size:10.5px;line-height:12px;color:#111;">3</div><div class="a" style="left:300px;top:6px;width:1px;height:3px;background:#111"></div><div class="a" style="left:312px;top:6px;width:1px;height:3px;background:#111"></div><div class="a" style="left:324px;top:6px;width:1px;height:3px;background:#111"></div><div class="a" style="left:336px;top:4px;width:1px;height:7px;background:#111"></div><div class="a" style="left:348px;top:6px;width:1px;height:3px;background:#111"></div><div class="a" style="left:360px;top:6px;width:1px;height:3px;background:#111"></div><div class="a" style="left:372px;top:6px;width:1px;height:3px;background:#111"></div><div class="t" style="left:379px;top:1px;width:10px;text-align:center;font-size:10.5px;line-height:12px;color:#111;">4</div><div class="a" style="left:396px;top:6px;width:1px;height:3px;background:#111"></div><div class="a" style="left:408px;top:6px;width:1px;height:3px;background:#111"></div><div class="a" style="left:420px;top:6px;width:1px;height:3px;background:#111"></div><div class="a" style="left:432px;top:4px;width:1px;height:7px;background:#111"></div><div class="a" style="left:444px;top:6px;width:1px;height:3px;background:#111"></div><div class="a" style="left:456px;top:6px;width:1px;height:3px;background:#111"></div><div class="a" style="left:468px;top:6px;width:1px;height:3px;background:#111"></div><div class="t" style="left:475px;top:1px;width:10px;text-align:center;font-size:10.5px;line-height:12px;color:#111;">5</div><div class="a" style="left:492px;top:6px;width:1px;height:3px;background:#111"></div><div class="a" style="left:504px;top:6px;width:1px;height:3px;background:#111"></div><div class="a" style="left:516px;top:6px;width:1px;height:3px;background:#111"></div><div class="a" style="left:528px;top:4px;width:1px;height:7px;background:#111"></div><div class="a" style="left:540px;top:6px;width:1px;height:3px;background:#111"></div><div class="a" style="left:552px;top:6px;width:1px;height:3px;background:#111"></div><div class="a" style="left:564px;top:6px;width:1px;height:3px;background:#111"></div></div>
<div class="a" style="left:950px;top:154px;width:1px;height:18px;background:#111"></div>
<div class="vr" style="top:194px;height:95px;"><div class="a" style="left:6px;top:12px;width:3px;height:1px;background:#111"></div><div class="a" style="left:6px;top:24px;width:3px;height:1px;background:#111"></div><div class="a" style="left:6px;top:36px;width:3px;height:1px;background:#111"></div><div class="a" style="left:4px;top:48px;width:7px;height:1px;background:#111"></div><div class="a" style="left:6px;top:60px;width:3px;height:1px;background:#111"></div><div class="a" style="left:6px;top:72px;width:3px;height:1px;background:#111"></div><div class="a" style="left:6px;top:84px;width:3px;height:1px;background:#111"></div></div>
<div class="vr" style="top:292px;height:213px;"><div class="a" style="left:6px;top:11px;width:3px;height:1px;background:#111"></div><div class="a" style="left:6px;top:23px;width:3px;height:1px;background:#111"></div><div class="a" style="left:6px;top:35px;width:3px;height:1px;background:#111"></div><div class="a" style="left:4px;top:47px;width:7px;height:1px;background:#111"></div><div class="a" style="left:6px;top:59px;width:3px;height:1px;background:#111"></div><div class="a" style="left:6px;top:71px;width:3px;height:1px;background:#111"></div><div class="a" style="left:6px;top:83px;width:3px;height:1px;background:#111"></div><div class="t" style="left:1px;top:90px;width:12px;height:10px;text-align:center;font-size:10.5px;line-height:10px;color:#111;transform:rotate(-90deg);">1</div><div class="a" style="left:6px;top:107px;width:3px;height:1px;background:#111"></div><div class="a" style="left:6px;top:119px;width:3px;height:1px;background:#111"></div><div class="a" style="left:6px;top:131px;width:3px;height:1px;background:#111"></div><div class="a" style="left:4px;top:143px;width:7px;height:1px;background:#111"></div><div class="a" style="left:6px;top:155px;width:3px;height:1px;background:#111"></div><div class="a" style="left:6px;top:167px;width:3px;height:1px;background:#111"></div><div class="a" style="left:6px;top:179px;width:3px;height:1px;background:#111"></div><div class="t" style="left:1px;top:186px;width:12px;height:10px;text-align:center;font-size:10.5px;line-height:10px;color:#111;transform:rotate(-90deg);">2</div><div class="a" style="left:6px;top:203px;width:3px;height:1px;background:#111"></div></div>
<div class="vr" style="top:508px;height:42px;"><div class="a" style="left:6px;top:10px;width:3px;height:1px;background:#111"></div><div class="a" style="left:6px;top:22px;width:3px;height:1px;background:#111"></div><div class="a" style="left:6px;top:34px;width:3px;height:1px;background:#111"></div></div>
<div class="a" style="left:209px;top:289px;width:24px;height:3px;background:#ececec"></div><div class="a" style="left:209px;top:505px;width:24px;height:3px;background:#ececec"></div>
<div class="a" style="left:211px;top:630px;width:21px;height:1px;background:#111"></div>
<div class="a" style="left:253px;top:193px;width:580px;height:359px;background:#000"></div>
<div class="a" id="page">
<div class="dot" style="left:81px;top:35px;width:99px;height:26px;"></div><div class="dot" style="left:175px;top:53px;width:167px;height:26px;"></div><div class="rt" style="left:84px;top:39px;letter-spacing:-0.15px;">[@DateRange]</div><div class="rt" style="left:178px;top:57px;letter-spacing:0.15px;">[&amp;ReportName]</div><div class="hd" style="left:0px;top:96px;width:576px;"></div><div class="vd" style="left:529px;top:97px;height:47px;"></div><div class="hd" style="left:0px;top:144px;width:529px;"></div><div class="t" id="ttl" style="left:3px;top:108px;font-size:37px;line-height:40px;letter-spacing:-1.1px;color:#1a1a1a;-webkit-text-stroke:1.2px #fff;">Activities</div><div class="hd" style="left:0px;top:145px;width:576px;"></div><div class="hd" style="left:0px;top:312px;width:576px;"></div><div class="vd" style="left:96px;top:145px;height:168px;"></div><div class="vd" style="left:192px;top:145px;height:168px;"></div><div class="vd" style="left:288px;top:145px;height:168px;"></div><div class="vd" style="left:384px;top:145px;height:168px;"></div><div class="vd" style="left:480px;top:145px;height:168px;"></div><div class="a" style="left:0px;top:168px;width:576px;height:1px;background:#d3d3d3"></div><div class="a" style="left:0px;top:288px;width:576px;height:1px;background:#d3d3d3"></div><div class="a" style="left:96px;top:264px;width:480px;height:1px;background:#d3d3d3"></div><div class="a" style="left:192px;top:240px;width:384px;height:1px;background:#d3d3d3"></div><div class="a" style="left:288px;top:216px;width:288px;height:1px;background:#d3d3d3"></div><div class="a" style="left:384px;top:192px;width:192px;height:1px;background:#d3d3d3"></div><div class="rt" style="left:7px;top:149px;margin-top:0;font-weight:bold;font-size:14.5px;color:#666;line-height:18px;letter-spacing:0.2px;">Account Ma</div><div class="rt" style="right:388px;top:149px;margin-top:0;font-weight:bold;font-size:14.5px;color:#666;line-height:18px;letter-spacing:0.1px;">Type</div><div class="rt" style="left:201px;top:149px;margin-top:0;font-weight:bold;font-size:14.5px;color:#666;line-height:18px;letter-spacing:0.1px;">Account Na</div><div class="rt" style="left:300px;top:149px;margin-top:0;font-weight:bold;font-size:14.5px;color:#666;line-height:18px;letter-spacing:0.1px;">Contact Na</div><div class="rt" style="right:101px;top:149px;margin-top:0;font-weight:bold;font-size:14.5px;color:#666;line-height:18px;letter-spacing:-1.05px;">SUBJECT</div><div class="rt" style="right:4px;top:149px;margin-top:0;font-weight:bold;font-size:14.5px;color:#666;line-height:18px;letter-spacing:0.1px;">Type</div><div class="rt" style="left:3px;top:172px;width:91px;overflow:hidden;letter-spacing:-0.3px;">[Account_Manager]</div><div class="rt" style="left:99px;top:172px;width:91px;overflow:hidden;">[Type]</div><div class="rt" style="left:195px;top:172px;width:90px;overflow:hidden;">[Account_Name]</div><div class="rt" style="left:291px;top:172px;width:92px;overflow:hidden;letter-spacing:-0.15px;">[Contact_Name]</div><div class="rt" style="left:387px;top:172px;width:92px;overflow:hidden;letter-spacing:-1.05px;">[SUBJECT]</div><div class="rt" style="left:483px;top:172px;width:92px;overflow:hidden;letter-spacing:-0.1px;">[Count(Type)]</div><div class="rt" style="left:483px;top:196px;width:92px;overflow:hidden;letter-spacing:-0.1px;">[Count(Type)]</div><div class="rt" style="left:483px;top:220px;width:92px;overflow:hidden;letter-spacing:-0.1px;">[Count(Type)]</div><div class="rt" style="left:483px;top:244px;width:92px;overflow:hidden;letter-spacing:-0.1px;">[Count(Type)]</div><div class="rt" style="left:483px;top:268px;width:92px;overflow:hidden;letter-spacing:-0.1px;">[Count(Type)]</div><div class="rt" style="left:483px;top:292px;width:93px;overflow:hidden;font-weight:bold;color:#222;letter-spacing:0.1px;">[Count(Type)]</div><div class="rt" style="left:387px;top:196px;width:91px;overflow:hidden;">Total</div><div class="rt" style="left:291px;top:220px;width:91px;overflow:hidden;">Total</div><div class="rt" style="left:195px;top:244px;width:91px;overflow:hidden;">Total</div><div class="rt" style="left:99px;top:268px;width:91px;overflow:hidden;">Total</div><div class="rt" style="left:3px;top:292px;width:60px;overflow:hidden;font-weight:bold;color:#222;letter-spacing:0.2px;">Total</div><div class="hd" style="left:384px;top:331px;width:192px;"></div><div class="vd" style="left:384px;top:331px;height:24px;"></div><div class="rt" style="right:5px;top:334px;letter-spacing:-0.1px;">[&amp;ExecutionTime]</div><div class="vd" style="left:575px;top:145px;height:168px;"></div><div class="vd" style="left:575px;top:331px;height:24px;"></div><div class="hd" style="left:480px;top:192px;width:96px;background-color:#fff;"></div>
</div>

<div class="a" id="gp-head"></div>
<div class="a" id="gp-row"></div>
<div class="a" id="gp-col"></div>
<!-- grouping pane -->
<svg style="left:211px;top:677px" width="16" height="13" viewBox="0 0 16 13"><rect x="0" y="0" width="16" height="13" fill="#8c8c8c"/><rect x="1" y="1" width="4" height="2" fill="#ffffff"/><rect x="6" y="1" width="4" height="2" fill="#ffffff"/><rect x="11" y="1" width="4" height="2" fill="#ffffff"/><rect x="1" y="4" width="4" height="2" fill="#c9d1d9"/><rect x="6" y="4" width="4" height="2" fill="#c9d1d9"/><rect x="11" y="4" width="4" height="2" fill="#c9d1d9"/><rect x="1" y="7" width="4" height="2" fill="#ffffff"/><rect x="6" y="7" width="4" height="2" fill="#ffffff"/><rect x="11" y="7" width="4" height="2" fill="#ffffff"/><rect x="1" y="10" width="4" height="2" fill="#c9d1d9"/><rect x="6" y="10" width="4" height="2" fill="#c9d1d9"/><rect x="11" y="10" width="4" height="2" fill="#c9d1d9"/></svg>
<svg style="left:707px;top:677px" width="16" height="13" viewBox="0 0 16 13"><rect x="0" y="0" width="16" height="13" fill="#8c8c8c"/><rect x="1" y="1" width="4" height="2" fill="#ffffff"/><rect x="6" y="1" width="4" height="2" fill="#ffffff"/><rect x="11" y="1" width="4" height="2" fill="#ffffff"/><rect x="1" y="4" width="4" height="2" fill="#c9d1d9"/><rect x="6" y="4" width="4" height="2" fill="#c9d1d9"/><rect x="11" y="4" width="4" height="2" fill="#c9d1d9"/><rect x="1" y="7" width="4" height="2" fill="#ffffff"/><rect x="6" y="7" width="4" height="2" fill="#ffffff"/><rect x="11" y="7" width="4" height="2" fill="#ffffff"/><rect x="1" y="10" width="4" height="2" fill="#c9d1d9"/><rect x="6" y="10" width="4" height="2" fill="#c9d1d9"/><rect x="11" y="10" width="4" height="2" fill="#c9d1d9"/></svg>
<div class="t w" style="left:236px;top:678px;font-size:12px;letter-spacing:-0.27px;">Row Groups</div>
<div class="t w" style="left:732px;top:678px;font-size:12px;letter-spacing:-0.23px;">Column Groups</div>
<svg style="left:1183px;top:684px" width="8" height="4" viewBox="0 0 8 4"><path d="M0 0 H8 L4 4 Z" fill="#c8c8c8"/></svg>
<div class="grp" style="left:210px;top:698px;width:490px;"><b></b><i>[</i><span style="letter-spacing:-0.1px">Account_Manager</span><u></u><svg style="right:6px;top:8px" width="7" height="4" viewBox="0 0 7 4"><path d="M0 0 H7 L3.500 4 Z" fill="#000"/></svg></div>
<div class="grp" style="left:226px;top:719px;width:474px;"><b></b><i>[</i><span style="letter-spacing:-0.35px">Type</span><u></u><svg style="right:6px;top:8px" width="7" height="4" viewBox="0 0 7 4"><path d="M0 0 H7 L3.500 4 Z" fill="#000"/></svg></div>
<div class="grp" style="left:242px;top:740px;width:458px;"><b></b><i>[</i><span style="letter-spacing:-0.25px">Account_Name</span><u></u><svg style="right:6px;top:8px" width="7" height="4" viewBox="0 0 7 4"><path d="M0 0 H7 L3.500 4 Z" fill="#000"/></svg></div>
<div class="grp" style="left:258px;top:761px;width:442px;"><b></b><i>[</i><span style="letter-spacing:-0.25px">Contact_Name</span><u></u><svg style="right:6px;top:8px" width="7" height="4" viewBox="0 0 7 4"><path d="M0 0 H7 L3.500 4 Z" fill="#000"/></svg></div>
<div class="grp" style="left:274px;top:782px;width:426px;"><b></b><i>[</i><span style="letter-spacing:-1.3px">SUBJECT</span><u></u><svg style="right:6px;top:8px" width="7" height="4" viewBox="0 0 7 4"><path d="M0 0 H7 L3.500 4 Z" fill="#000"/></svg></div>
<div class="a" id="status"></div>
<div class="a" style="left:781px;top:823px;width:18px;height:16px;background:#f4f4f4;"></div>
<svg style="left:784px;top:825px" width="10" height="11" viewBox="0 0 10 11"><rect x="0" y="0" width="10" height="11" fill="#c9c2bc"/><rect x="0" y="0.500" width="9" height="7" fill="#3f6eae"/><path d="M2 1 L7 6.500" stroke="#e8f0ff" stroke-width="1.600"/><path d="M6 1 H9 V5 Z" fill="#d8dce4"/><rect x="0" y="7.500" width="8.500" height="3" fill="#e8ae86"/><rect x="0" y="8.500" width="8" height="1" fill="#f2cdb0"/></svg>
<div class="a" style="left:799px;top:822px;width:20px;height:18px;box-sizing:border-box;border:1px solid #3c3c3c;"></div>
<svg style="left:803px;top:825px" width="11" height="11" viewBox="0 0 11 11"><path d="M2 0 H9 V4 H11 V8 H9 V10.500 H2 V8 H0 V4 H2 Z" fill="#d8dcd8"/><path d="M3 3 V6 M5 2 V5 M3 6.500 H6 M7 5 V10 M7 5 C9 5.500 9 8.500 7 9" stroke="#555" stroke-width="0.900" fill="none"/></svg>
<div class="t" style="left:828px;top:826px;font-size:12.5px;color:#ececec;letter-spacing:-1.0px;">100%</div>
<div class="a" style="left:868px;top:829px;width:12px;height:4px;background:#f4f4f4;"></div>
<div class="a" style="left:885px;top:830px;width:103px;height:2px;background:#f4f4f4;"></div>
<div class="a" style="left:934px;top:827px;width:3px;height:8px;background:#f4f4f4;"></div>
<div class="a" style="left:993px;top:829px;width:12px;height:4px;background:#f4f4f4;"></div><div class="a" style="left:997px;top:825px;width:4px;height:12px;background:#f4f4f4;"></div>
<div class="a" style="left:0;top:842px;width:1202px;height:2px;background:#414141;"></div>
</body>
</html>
